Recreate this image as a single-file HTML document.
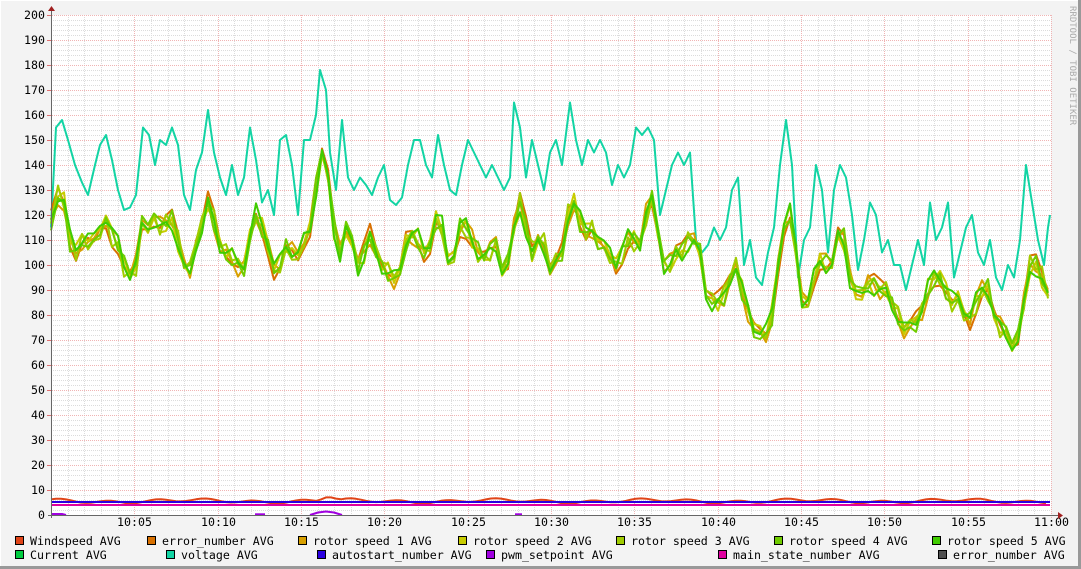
<!DOCTYPE html>
<html><head><meta charset="utf-8"><style>
html,body{margin:0;padding:0;background:#f3f3f3}
svg{display:block}
text{font-family:"DejaVu Sans Mono","Liberation Mono",monospace;font-size:11.6px;fill:#000}
</style></head><body>
<svg id="g" width="1081" height="569" xmlns="http://www.w3.org/2000/svg"></svg>
<script>
var S=document.getElementById('g'),h='';
h+='<rect x="0" y="0" width="1081" height="569" fill="#f3f3f3"/>';
h+='<line x1="0" y1="0.5" x2="1081" y2="0.5" stroke="#fff"/><line x1="0.5" y1="0" x2="0.5" y2="569" stroke="#fff"/>';
h+='<line x1="0" y1="567.5" x2="1081" y2="567.5" stroke="#999" stroke-width="3"/><line x1="1079.5" y1="0" x2="1079.5" y2="569" stroke="#999" stroke-width="3"/>';
h+='<rect x="51" y="15" width="1000" height="500" fill="#fff"/>';
function Y(v){return 515-v*2.5}
for(var v=2;v<=200;v+=2){if(v%10)h+='<line x1="51" x2="1051" y1="'+(Y(v)+.5)+'" y2="'+(Y(v)+.5)+'" stroke="#dcdcdc" stroke-dasharray="1,1"/>';}
for(var m=1;m<=60;m++){var x=51+m*1000/60;x=Math.round(x)+.5;if(m%5)h+='<line y1="15" y2="515" x1="'+x+'" x2="'+x+'" stroke="#dcdcdc" stroke-dasharray="1,1"/>';}
for(var v=10;v<=200;v+=10){h+='<line x1="48" x2="1051" y1="'+(Y(v)+.5)+'" y2="'+(Y(v)+.5)+'" stroke="#f0b4b4" stroke-dasharray="1,1"/>';h+='<line x1="47" x2="51" y1="'+(Y(v)+.5)+'" y2="'+(Y(v)+.5)+'" stroke="#e07070"/>';}
var lab=['10:05','10:10','10:15','10:20','10:25','10:30','10:35','10:40','10:45','10:50','10:55','11:00'];
for(var m=5;m<=60;m+=5){var x=Math.round(51+m*1000/60)+.5;h+='<line y1="15" y2="518" x1="'+x+'" x2="'+x+'" stroke="#f0b4b4" stroke-dasharray="1,1"/>';h+='<text x="'+x+'" y="526" text-anchor="middle">'+lab[m/5-1]+'</text>';}
for(var v=0;v<=200;v+=10){h+='<text x="45" y="'+(Y(v)+4)+'" text-anchor="end">'+v+'</text>';}
function pl(pts,c,w){var s='';for(var i=0;i<pts.length;i+=2)s+=pts[i]+','+Y(pts[i+1]).toFixed(1)+' ';return '<polyline points="'+s+'" fill="none" stroke="'+c+'" stroke-width="'+(w||2)+'" stroke-linejoin="round"/>';}
var V=[51,115,56,155,62,158,68,150,75,140,82,133,88,128,95,140,100,148,106,152,112,142,118,130,124,122,130,123,136,128,143,155,149,152,155,140,160,150,166,148,172,155,178,148,184,128,190,122,196,138,202,145,208,162,214,145,220,135,226,128,232,140,238,128,244,135,250,155,256,142,262,125,268,130,274,120,280,150,286,152,292,140,298,120,304,150,310,150,316,160,320,178,326,170,330,145,336,130,342,158,348,135,354,130,360,135,366,132,372,128,378,135,384,140,390,126,396,124,402,127,408,140,414,150,420,150,426,140,432,135,438,152,444,140,450,130,456,128,462,140,468,150,474,145,480,140,486,135,492,140,498,135,504,130,510,135,514,165,520,155,526,135,532,150,538,140,544,130,550,145,556,150,562,140,570,165,576,150,582,140,588,150,594,145,600,150,606,145,612,132,618,140,624,135,630,140,636,155,642,152,648,155,654,150,660,120,666,130,672,140,678,145,684,140,690,145,696,110,702,105,708,108,714,115,720,110,726,115,732,130,738,135,744,100,750,110,756,95,762,92,768,105,774,115,780,140,786,158,792,140,798,95,804,110,810,115,816,140,822,130,828,105,834,130,840,140,846,135,852,120,858,98,864,110,870,125,876,120,882,105,888,110,894,100,900,100,906,90,912,100,918,110,924,100,930,125,936,110,942,115,948,125,954,95,960,105,966,115,972,120,978,105,984,100,990,110,996,95,1002,90,1008,100,1014,95,1020,110,1026,140,1032,125,1038,110,1044,100,1048,115,1050,120];
var G=[51,118,58,128,64,125,70,110,76,105,82,110,88,110,94,108,100,115,106,118,112,112,118,108,124,100,130,96,136,100,142,115,148,117,154,118,160,115,166,117,172,118,178,110,184,100,190,97,196,110,202,115,208,125,214,118,220,108,226,105,232,103,238,100,244,100,250,110,256,120,262,115,268,108,274,98,280,100,286,107,292,105,298,103,304,110,310,115,316,130,322,145,328,135,334,115,340,105,346,115,352,110,358,100,364,105,370,112,376,105,382,100,388,98,394,95,400,97,406,110,412,112,418,110,424,105,430,108,436,118,442,115,448,100,454,105,460,115,466,115,472,110,478,105,484,103,490,105,496,108,502,100,508,100,514,115,520,125,526,115,532,105,538,110,544,108,550,100,556,100,562,105,568,120,574,125,580,118,586,113,592,115,598,110,604,105,610,105,616,100,622,105,628,110,634,110,640,108,646,120,652,125,658,115,664,100,670,100,676,105,682,105,688,110,694,110,700,105,706,90,712,85,718,85,724,88,730,95,736,100,742,90,748,82,754,75,760,72,766,72,772,80,778,100,784,115,790,120,796,105,802,85,808,85,814,95,820,102,826,100,832,100,838,112,844,110,850,95,856,90,862,88,868,93,874,92,880,90,886,90,892,85,898,80,904,75,910,75,916,78,922,82,928,90,934,95,940,95,946,90,952,85,958,85,964,82,970,78,976,85,982,90,988,90,994,80,1000,75,1006,72,1012,70,1018,70,1024,85,1030,100,1036,100,1042,95,1048,88];
function vary(a,seed,amp){var r=[];for(var i=0;i<a.length;i+=2){var n=Math.sin(i*0.37*seed+seed)*amp+Math.sin(i*0.11+seed*2)*amp*0.6;r.push(a[i],a[i+1]+n);}return r;}
var W=[];for(var x=51;x<=1050;x+=5){W.push(x,5.6+Math.sin(x*0.13)*0.6+Math.sin(x*0.041)*0.5+(Math.abs(x-328)<12?2*(1-Math.abs(x-328)/12):0));}
h+=pl(W,'#e04418',2);
h+='<line x1="51" x2="1050" y1="'+Y(4)+'" y2="'+Y(4)+'" stroke="#e000a0" stroke-width="2"/>';
h+='<line x1="51" x2="1050" y1="'+Y(5.2)+'" y2="'+Y(5.2)+'" stroke="#2a00e0" stroke-width="2"/>';
h+=pl([51,0.4,62,0.4,66,0],'#a000e0',2)+pl([310,0,318,1,326,1.4,334,1,342,0],'#a000e0',2)+pl([255,0.3,265,0.3],'#a000e0',2)+pl([515,0.3,522,0.3],'#a000e0',2);
h+=pl(V,'#12d4a4',2);
var cols=['#d87000','#d8a000','#c8cc00','#a0cc00','#70cc00','#40cc00'];
for(var k=0;k<cols.length;k++)h+=pl(vary(G,k+1.3,3),cols[k],2);
h+='<line x1="51.5" y1="10" x2="51.5" y2="518" stroke="#666"/><line x1="48" y1="515.5" x2="1058" y2="515.5" stroke="#666"/>';
h+='<polygon points="48,11 55,11 51.5,6" fill="#a02020"/><polygon points="1058,512 1058,519 1063,515.5" fill="#a02020"/>';
h+='<text transform="translate(1070,6) rotate(90)" style="font-size:9px;fill:#aaa">RRDTOOL / TOBI OETIKER</text>';
var L=[[15,541,'#e04418','Windspeed AVG'],[147,541,'#d87000','error_number AVG'],[298,541,'#d8a000','rotor speed 1 AVG'],[458,541,'#c8cc00','rotor speed 2 AVG'],[616,541,'#a0cc00','rotor speed 3 AVG'],[774,541,'#70cc00','rotor speed 4 AVG'],[932,541,'#40cc00','rotor speed 5 AVG'],[15,555,'#00cc40','Current AVG'],[166,555,'#12d4a4','voltage AVG'],[317,555,'#2a00e0','autostart_number AVG'],[486,555,'#a000e0','pwm_setpoint AVG'],[718,555,'#e000a0','main_state_number AVG'],[938,555,'#505050','error_number AVG']];
L.forEach(function(l){h+='<rect x="'+(l[0]+.5)+'" y="'+(l[1]-4.5)+'" width="8" height="8" fill="'+l[2]+'" stroke="#000"/>';h+='<text x="'+(l[0]+15)+'" y="'+(l[1]+4)+'">'+l[3]+'</text>';});
S.innerHTML=h;
</script>
</body></html>
